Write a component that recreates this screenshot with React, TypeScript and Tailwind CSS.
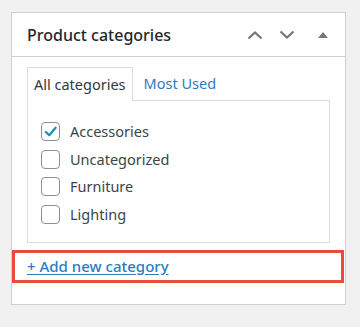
import { useState } from "react";

const categories = ["Accessories", "Uncategorized", "Furniture", "Lighting"];

function CheckMark() {
  return (
    <svg viewBox="0 0 20 20" className="w-[17px] h-[17px]">
      <path d="M4.5 10.5 L8.5 14.5 L16 5.5" fill="none" stroke="#1e8cbe" strokeWidth="2.6" strokeLinecap="round" strokeLinejoin="round" />
    </svg>
  );
}

export default function App() {
  const [checked, setChecked] = useState<string[]>(["Accessories"]);

  const toggle = (name: string) => {
    setChecked(checked.includes(name) ? checked.filter((c) => c !== name) : [...checked, name]);
  };

  return (
    <div className="w-[360px] h-[327px] bg-[#f1f1f1] pt-3 pl-[11px] font-['Noto_Sans',sans-serif]">
      <div className="w-[335px] h-[293px] bg-white border border-[#ccd0d4]">
        {/* header */}
        <div className="h-[44px] flex items-center justify-between pl-[15px] pr-[17px] border-b border-[#ccd0d4]">
          <h2 className="text-[16px] font-medium text-[#23282d]">Product categories</h2>
          <div className="flex items-center gap-[16px] text-[#72777c]">
            <svg viewBox="0 0 16 10" className="w-[16px] h-[10px]">
              <path d="M1.5 8.5 L8 2.5 L14.5 8.5" fill="none" stroke="currentColor" strokeWidth="2.2" />
            </svg>
            <svg viewBox="0 0 16 10" className="w-[16px] h-[10px]">
              <path d="M1.5 1.5 L8 7.5 L14.5 1.5" fill="none" stroke="currentColor" strokeWidth="2.2" />
            </svg>
            <svg viewBox="0 0 10 6" className="w-[10px] h-[6px] ml-[7px]">
              <path d="M0 6 L5 0 L10 6 Z" fill="currentColor" />
            </svg>
          </div>
        </div>

        {/* tabs */}
        <div className="px-[15px] pt-[10px]">
          <div className="flex items-end">
            <div className="h-[34px] px-[6px] flex items-center border border-b-0 border-[#dcdcde] bg-white text-[14.5px] text-[#32373c] relative -mb-px z-10">
              All categories
            </div>
            <a href="#" className="h-[33px] px-[11px] flex items-center text-[14.5px] text-[#2b7bc0]">
              Most Used
            </a>
          </div>
          <div className="h-[143px] border border-[#dcdcde] pt-[21px] pl-[13px] flex flex-col gap-[8.5px]">
            {categories.map((c) => (
              <label key={c} className="flex items-center gap-[10px] text-[14.5px] text-[#3c434a] cursor-pointer">
                <span
                  onClick={() => toggle(c)}
                  className="w-[19px] h-[19px] rounded-[4px] border border-[#8c8f94] flex items-center justify-center bg-white"
                >
                  {checked.includes(c) && <CheckMark />}
                </span>
                <span className="leading-[19px]">{c}</span>
              </label>
            ))}
          </div>
        </div>

        {/* add new */}
        <div className="mt-[7px] h-[33px] border-[3px] border-[#e74c3c] flex items-center pl-[12px] mr-[1px]">
          <a href="#" className="text-[15px] font-medium text-[#2b7bc0] underline underline-offset-2">
            + Add new category
          </a>
        </div>
      </div>
    </div>
  );
}
